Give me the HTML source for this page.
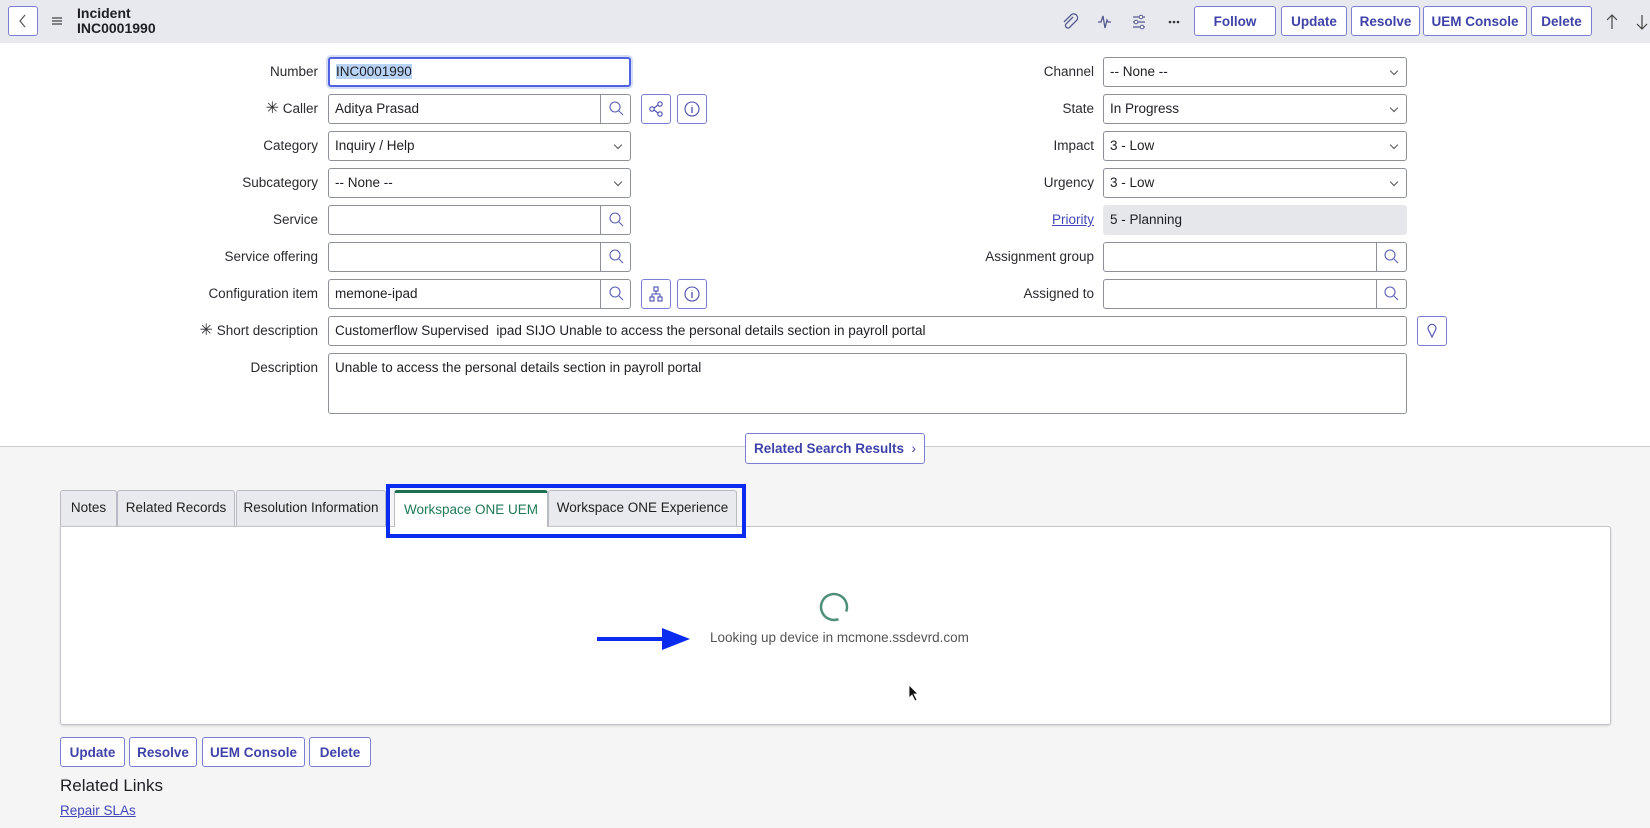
<!DOCTYPE html>
<html><head><meta charset="utf-8"><style>
*{box-sizing:border-box;margin:0;padding:0}
body{width:1650px;height:828px;overflow:hidden;background:#f5f5f6;font-family:"Liberation Sans",sans-serif;font-size:13px;color:#1e1e24;position:relative}
.a{position:absolute}
.hdr{left:0;top:0;width:1650px;height:43px;background:#e8e9ee}
.top{left:0;top:43px;width:1650px;height:404px;background:#fff;border-bottom:1px solid #c9ccd4}
.btn{position:absolute;height:30px;border:1px solid #7b7fd1;border-radius:3px;background:#fff;color:#3f42a8;font-weight:bold;font-size:13.5px;display:flex;align-items:center;justify-content:center}
.lbl{position:absolute;text-align:right;font-size:13.5px;line-height:30px;color:#2a2a30}
.inp{position:absolute;height:30px;border:1px solid #8d9099;border-radius:3px;background:#fff;font-size:13.5px;line-height:28px;padding-left:6px;color:#1e1e24}
.sel::after{content:"";position:absolute;right:9px;top:10px;width:5px;height:5px;border-right:1px solid #555;border-bottom:1px solid #555;transform:rotate(45deg)}
.srch{position:absolute;right:0;top:0;width:30px;height:28px;border-left:1px solid #8d9099}
.ib{position:absolute;width:30px;height:30px;border:1px solid #7b7fd1;border-radius:3px;background:#fff}
.tab{position:absolute;top:490px;height:36px;border:1px solid #b8bbc3;border-bottom:none;border-radius:3px 3px 0 0;background:#e9eaed;font-size:13.5px;line-height:34px;text-align:center;color:#222}
</style></head><body>
<div class="a hdr"></div>
<div class="ib" style="left:8px;top:6px;width:30px;height:30px;border-color:#7b7fd1"><svg width="28" height="28"><path d="M16 8 L11 14 L16 20" fill="none" stroke="#555" stroke-width="1.2"/></svg></div>
<svg class="a" style="left:51px;top:15px" width="12" height="12"><path d="M1 3H11M1 6H11M1 9H11" stroke="#444" stroke-width="1.2"/></svg>
<div class="a" style="left:77px;top:6px;font-size:14px;font-weight:bold;line-height:15px">Incident<br>INC0001990</div>
<svg class="a" style="left:1062px;top:12px" width="130" height="20">
<path d="M12 6 L5 13 a2.5 2.5 0 0 0 3.5 3.5 L16 9 a4 4 0 0 0 -5.5 -5.5 L3 11" fill="none" stroke="#555a8f" stroke-width="1.3" transform="translate(-1,-1)"/>
<path d="M36 10 H39 L41 4 L43 16 L45 8 L46 10 H49" fill="none" stroke="#555a8f" stroke-width="1.3"/>
<path d="M71 5H83M71 10H83M71 15H83" stroke="#555a8f" stroke-width="1.2"/><circle cx="79" cy="5" r="1.8" fill="#fff" stroke="#555a8f"/><circle cx="74" cy="10" r="1.8" fill="#fff" stroke="#555a8f"/><circle cx="80" cy="15" r="1.8" fill="#fff" stroke="#555a8f"/>
<circle cx="108" cy="10" r="1.3" fill="#333"/><circle cx="112" cy="10" r="1.3" fill="#333"/><circle cx="116" cy="10" r="1.3" fill="#333"/>
</svg>
<div class="btn" style="left:1194px;top:6px;width:82px">Follow</div>
<div class="btn" style="left:1281px;top:6px;width:66px">Update</div>
<div class="btn" style="left:1351px;top:6px;width:69px">Resolve</div>
<div class="btn" style="left:1423px;top:6px;width:104px">UEM Console</div>
<div class="btn" style="left:1531px;top:6px;width:61px">Delete</div>
<svg class="a" style="left:1604px;top:12px" width="46" height="20"><path d="M8 17V3M3 8L8 3L13 8" fill="none" stroke="#444" stroke-width="1.2"/><path d="M38 3V17M33 12L38 17L43 12" fill="none" stroke="#444" stroke-width="1.2"/></svg>

<div class="a top"></div>
<!-- left column -->
<div class="lbl" style="left:150px;width:168px;top:57px">Number</div>
<div class="inp" style="left:328px;top:57px;width:303px;border:2px solid #4f63e0;box-shadow:0 0 0 2px #d6dcf7;line-height:26px"><span style="background:#b9d3f5">INC0001990</span></div>
<div class="lbl" style="left:150px;width:168px;top:94px"><span style="font-size:16px">✳</span> Caller</div>
<div class="inp" style="left:328px;top:94px;width:303px">Aditya Prasad<div class="srch"></div></div>
<div class="lbl" style="left:150px;width:168px;top:131px">Category</div>
<div class="inp sel" style="left:328px;top:131px;width:303px">Inquiry / Help</div>
<div class="lbl" style="left:150px;width:168px;top:168px">Subcategory</div>
<div class="inp sel" style="left:328px;top:168px;width:303px">-- None --</div>
<div class="lbl" style="left:150px;width:168px;top:205px">Service</div>
<div class="inp" style="left:328px;top:205px;width:303px"><div class="srch"></div></div>
<div class="lbl" style="left:150px;width:168px;top:242px">Service offering</div>
<div class="inp" style="left:328px;top:242px;width:303px"><div class="srch"></div></div>
<div class="lbl" style="left:150px;width:168px;top:279px">Configuration item</div>
<div class="inp" style="left:328px;top:279px;width:303px">memone-ipad<div class="srch"></div></div>
<div class="lbl" style="left:150px;width:168px;top:316px"><span style="font-size:16px">✳</span> Short description</div>
<div class="inp" style="left:328px;top:316px;width:1079px">Customerflow Supervised&nbsp; ipad SIJO Unable to access the personal details section in payroll portal</div>
<div class="lbl" style="left:150px;width:168px;top:353px">Description</div>
<div class="inp" style="left:328px;top:353px;width:1079px;height:61px">Unable to access the personal details section in payroll portal</div>
<!-- right column -->
<div class="lbl" style="left:900px;width:194px;top:57px">Channel</div>
<div class="inp sel" style="left:1103px;top:57px;width:304px">-- None --</div>
<div class="lbl" style="left:900px;width:194px;top:94px">State</div>
<div class="inp sel" style="left:1103px;top:94px;width:304px">In Progress</div>
<div class="lbl" style="left:900px;width:194px;top:131px">Impact</div>
<div class="inp sel" style="left:1103px;top:131px;width:304px">3 - Low</div>
<div class="lbl" style="left:900px;width:194px;top:168px">Urgency</div>
<div class="inp sel" style="left:1103px;top:168px;width:304px">3 - Low</div>
<div class="lbl" style="left:900px;width:194px;top:205px"><span style="color:#4346b8;text-decoration:underline">Priority</span></div>
<div class="inp" style="left:1103px;top:205px;width:304px;background:#e6e7eb;border-color:#e6e7eb">5 - Planning</div>
<div class="lbl" style="left:900px;width:194px;top:242px">Assignment group</div>
<div class="inp" style="left:1103px;top:242px;width:304px"><div class="srch"></div></div>
<div class="lbl" style="left:900px;width:194px;top:279px">Assigned to</div>
<div class="inp" style="left:1103px;top:279px;width:304px"><div class="srch"></div></div>
<!-- search icons -->
<svg class="a" style="left:0;top:0;pointer-events:none;z-index:5" width="1650" height="330">
<g fill="none" stroke="#5a5eb4" stroke-width="1.1">
<g id="s"><circle cx="615" cy="107" r="5"/><path d="M619 111L623 115"/></g>
<use href="#s" y="111"/><use href="#s" y="148"/><use href="#s" y="185"/>
<use href="#s" x="775" y="148"/><use href="#s" x="775" y="185"/>
</g></svg>
<div class="ib" style="left:641px;top:94px"><svg width="28" height="28"><g fill="none" stroke="#4b4fae" stroke-width="1.1"><circle cx="10" cy="14" r="2.2"/><circle cx="18" cy="9" r="2.2"/><circle cx="18" cy="19" r="2.2"/><path d="M12 13L16 10M12 15L16 18"/></g></svg></div>
<div class="ib" style="left:677px;top:94px"><svg width="28" height="28"><circle cx="14" cy="14" r="7" fill="none" stroke="#4b4fae" stroke-width="1.1"/><path d="M14 12V18M14 10V10.5" stroke="#4b4fae" stroke-width="1.3"/></svg></div>
<div class="ib" style="left:641px;top:279px"><svg width="28" height="28"><g fill="none" stroke="#4b4fae" stroke-width="1.1"><rect x="12" y="7" width="4" height="4"/><rect x="8" y="17" width="4" height="4"/><rect x="16" y="17" width="4" height="4"/><path d="M14 11V14M10 17V14H18V17"/></g></svg></div>
<div class="ib" style="left:677px;top:279px"><svg width="28" height="28"><circle cx="14" cy="14" r="7" fill="none" stroke="#4b4fae" stroke-width="1.1"/><path d="M14 12V18M14 10V10.5" stroke="#4b4fae" stroke-width="1.3"/></svg></div>
<div class="ib" style="left:1417px;top:316px"><svg width="28" height="28"><path d="M14 20 L11 14 a4 4 0 1 1 6 0 Z" fill="none" stroke="#4b4fae" stroke-width="1.1"/></svg></div>

<div class="btn" style="left:745px;top:433px;width:180px;height:31px">Related Search Results&nbsp;&nbsp;<span style="font-weight:normal">›</span></div>

<!-- tabs -->
<div class="tab" style="left:60px;width:57px">Notes</div>
<div class="tab" style="left:117px;width:118px">Related Records</div>
<div class="tab" style="left:236px;width:150px">Resolution Information</div>
<div class="tab" style="left:394px;width:154px;background:#fff;color:#1e7a55;border-top:3px solid #1e6e52;height:37px;z-index:2">Workspace ONE UEM</div>
<div class="tab" style="left:548px;width:189px">Workspace ONE Experience</div>
<div class="a" style="left:386px;top:484px;width:360px;height:54px;border:4px solid #0a2cf0;z-index:3"></div>
<div class="a" style="left:60px;top:526px;width:1551px;height:199px;background:#fff;border:1px solid #c4c6cc;border-radius:0 3px 3px 3px;box-shadow:0 1px 2px rgba(0,0,0,.15)"></div>
<svg class="a" style="left:818px;top:591px" width="32" height="32"><circle cx="16" cy="16" r="13" fill="none" stroke="#4f8f7a" stroke-width="2.5" stroke-dasharray="70 12" transform="rotate(70 16 16)"/></svg>
<div class="a" style="left:710px;top:630px;font-size:13.5px;color:#555">Looking up device in mcmone.ssdevrd.com</div>
<svg class="a" style="left:595px;top:626px" width="100" height="26"><path d="M2 13H70" stroke="#0a2cf0" stroke-width="4"/><path d="M67 2L95 13L67 24Z" fill="#0a2cf0"/></svg>
<svg class="a" style="left:908px;top:684px" width="12" height="18"><path d="M1 1V14L4 11L7 17L9 16L6 10H10Z" fill="#111" stroke="#fff" stroke-width=".8"/></svg>

<div class="btn" style="left:60px;top:737px;width:65px">Update</div>
<div class="btn" style="left:129px;top:737px;width:68px">Resolve</div>
<div class="btn" style="left:202px;top:737px;width:103px">UEM Console</div>
<div class="btn" style="left:309px;top:737px;width:62px">Delete</div>
<div class="a" style="left:60px;top:776px;font-size:17px;color:#1e1e24">Related Links</div>
<div class="a" style="left:60px;top:803px;font-size:13.5px;color:#4346b8;text-decoration:underline">Repair SLAs</div>
</body></html>
